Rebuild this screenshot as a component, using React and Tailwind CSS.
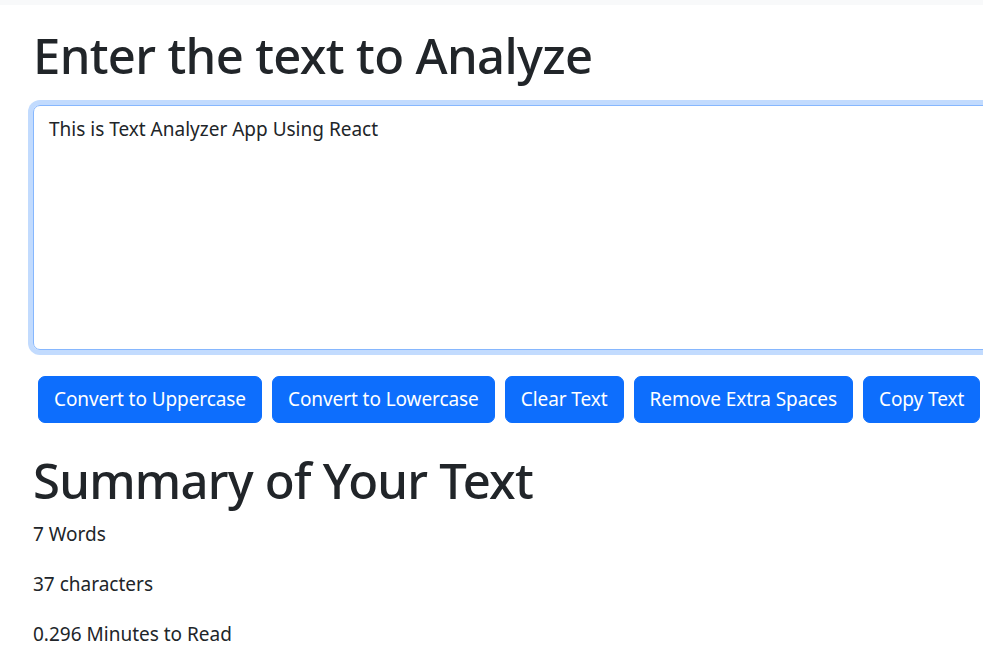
import { useState } from "react";

const buttons = [
  "Convert to Uppercase",
  "Convert to Lowercase",
  "Clear Text",
  "Remove Extra Spaces",
  "Copy Text",
];

export default function App() {
  const [text, setText] = useState("This is Text Analyzer App Using React");

  const words = text.split(/\s+/).filter((w) => w.length > 0).length;
  const minutes = Number((0.008 * text.length).toFixed(3));

  return (
    <div
      className="w-screen h-screen overflow-hidden bg-white text-[#212529]"
      style={{ fontFamily: '"Noto Sans", "Open Sans", sans-serif' }}
    >
      {/* navbar edge */}
      <div className="h-[5px] bg-[#f8f9fa]"></div>

      <div className="pl-[33px] w-[1100px]">
        <h1 className="mt-[20px] text-[49px] leading-[60px] font-medium tracking-[-0.65px]">
          Enter the text to Analyze
        </h1>

        <div className="mt-[20px]">
          <textarea
            value={text}
            onChange={(e) => setText(e.target.value)}
            className="block w-full h-[245px] px-[15px] py-[8px] text-[19px] leading-[30px] border border-[#86b7fe] rounded-[7px] outline-none shadow-[0_0_0_5px_#c2dbfe] resize-none"
          ></textarea>
        </div>

        <div className="mt-[26px] flex">
          {buttons.map((b) => (
            <button
              key={b}
              type="button"
              className="mx-[5px] h-[47px] px-[15px] flex items-center bg-[#0d6efd] text-white text-[19px] tracking-[-0.08px] rounded-[7px] border border-[#0d6efd]"
            >
              {b}
            </button>
          ))}
        </div>

        <h1 className="mt-[27px] text-[49px] leading-[60px] font-medium tracking-[-0.75px]">
          Summary of Your Text
        </h1>
        <p className="mt-[9px] text-[19px] leading-[30px]">{words} Words</p>
        <p className="mt-[20px] text-[19px] leading-[30px]">{text.length} characters</p>
        <p className="mt-[20px] text-[19px] leading-[30px]">{minutes} Minutes to Read</p>
      </div>
    </div>
  );
}
